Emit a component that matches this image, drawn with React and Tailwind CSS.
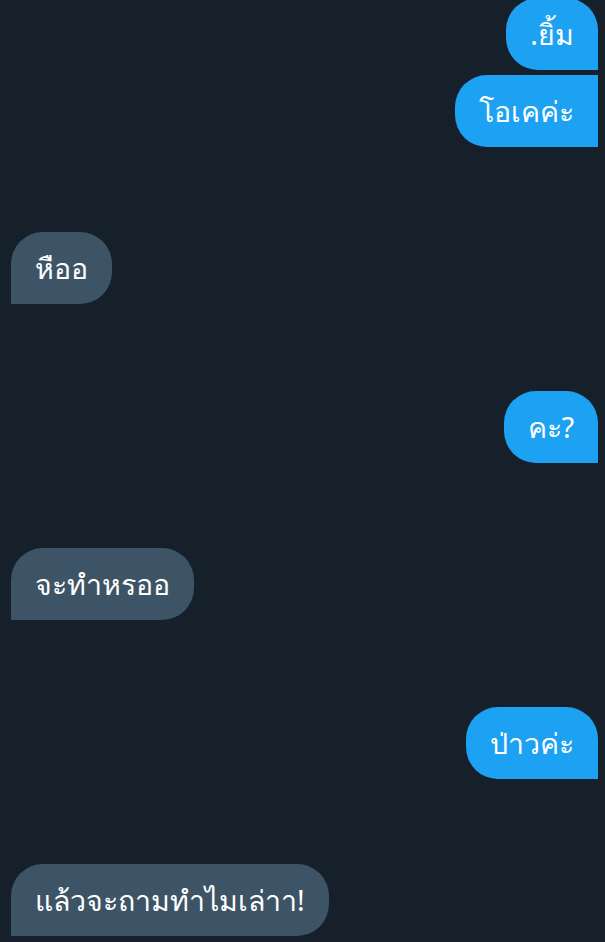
import React from 'react';

const messages = [
  { side: 'me', text: '.ยิ้ม', shape: 'rounded-l-[32px] rounded-tr-[32px]', mt: 'mt-[-2px]' },
  { side: 'me', text: 'โอเคค่ะ', shape: 'rounded-l-[32px]', mt: 'mt-[5px]' },
  { side: 'them', text: 'หืออ', shape: 'rounded-r-[32px] rounded-tl-[32px]', mt: 'mt-[85px]' },
  { side: 'me', text: 'คะ?', shape: 'rounded-l-[32px] rounded-tr-[32px]', mt: 'mt-[87px]' },
  { side: 'them', text: 'จะทำหรออ', shape: 'rounded-r-[32px] rounded-tl-[32px]', mt: 'mt-[85px]' },
  { side: 'me', text: 'ป่าวค่ะ', shape: 'rounded-l-[32px] rounded-tr-[32px]', mt: 'mt-[87px]' },
  { side: 'them', text: 'แล้วจะถามทำไมเล่าา!', shape: 'rounded-r-[32px] rounded-tl-[32px]', mt: 'mt-[85px]' },
];

const Bubble = ({ side, text, shape, mt }) => {
  const mine = side === 'me';
  return (
    <div className={`flex ${mine ? 'justify-end pr-[7px]' : 'justify-start pl-[11px]'} ${mt}`}>
      <div
        className={`h-[72px] flex items-center px-[24px] text-[28.5px] text-white ${shape} ${
          mine ? 'bg-[#1da1f2]' : 'bg-[#3d5466]'
        }`}
      >
        {text}
      </div>
    </div>
  );
};

export default function App() {
  return (
    <div
      className="w-[605px] h-[942px] overflow-hidden bg-[#15202b] flex flex-col"
      style={{ fontFamily: '"Noto Sans", "DejaVu Sans", sans-serif' }}
    >
      {messages.map((m, i) => (
        <Bubble key={i} {...m} />
      ))}
    </div>
  );
}
